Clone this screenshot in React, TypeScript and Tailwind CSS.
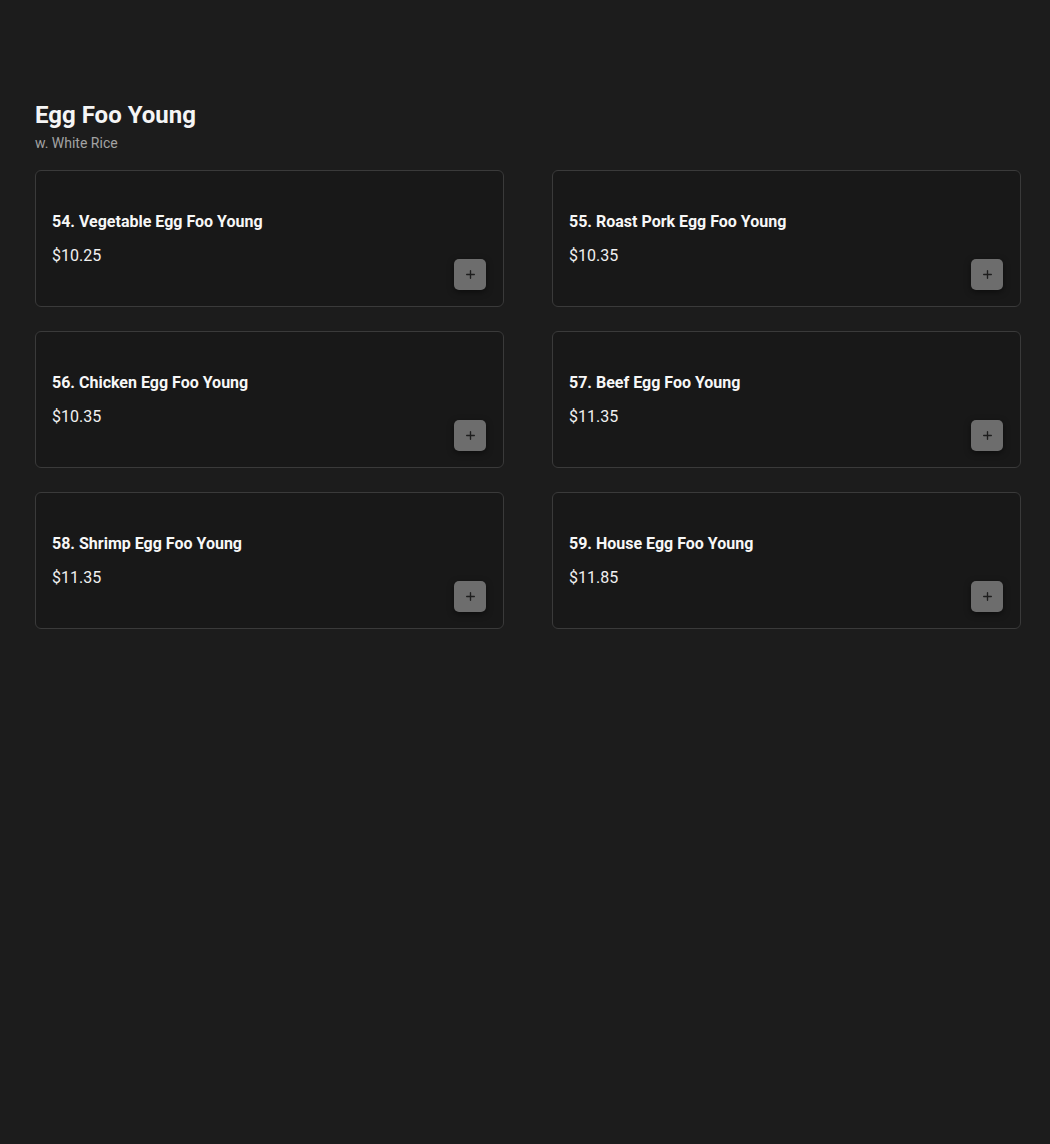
import { Plus } from 'lucide-react';

const items = [
    { name: '54. Vegetable Egg Foo Young', price: '$10.25' },
    { name: '55. Roast Pork Egg Foo Young', price: '$10.35' },
    { name: '56. Chicken Egg Foo Young', price: '$10.35' },
    { name: '57. Beef Egg Foo Young', price: '$11.35' },
    { name: '58. Shrimp Egg Foo Young', price: '$11.35' },
    { name: '59. House Egg Foo Young', price: '$11.85' },
];

export default function App() {
    return (
        <div className="min-h-[1144px] bg-[#1c1c1c] text-white font-['Roboto',sans-serif] pl-[35px] pr-[29px] pt-[99px]">
            {/* Section header */}
            <h2 className="text-2xl font-bold leading-8 text-[#f5f5f5]">Egg Foo Young</h2>
            <p className="text-sm leading-5 mt-[2px] text-[#a3a3a3]">w. White Rice</p>

            {/* Items */}
            <div className="grid grid-cols-2 gap-x-[48px] gap-y-[24px] mt-[17px]">
                {items.map((item) => (
                    <div
                        key={item.name}
                        className="h-[137px] flex rounded-md border border-[#3a3a3a] bg-[#181818] pl-4 pr-[17px] pb-4"
                    >
                        <div className="flex-1 flex flex-col justify-center pt-4">
                            <div className="text-base font-bold leading-6 text-[#f7f7f7]">{item.name}</div>
                            <div className="text-base leading-6 mt-[10px] text-[#f0f0f0]">{item.price}</div>
                        </div>
                        <button className="self-end w-8 h-[31px] rounded-[5px] bg-[#6d6d6d] flex items-center justify-center shadow-[0_2px_6px_rgba(0,0,0,0.5)]">
                            <Plus className="w-[13px] h-[13px] text-[#1e1e1e]" strokeWidth={2.5} />
                        </button>
                    </div>
                ))}
            </div>
        </div>
    );
}
